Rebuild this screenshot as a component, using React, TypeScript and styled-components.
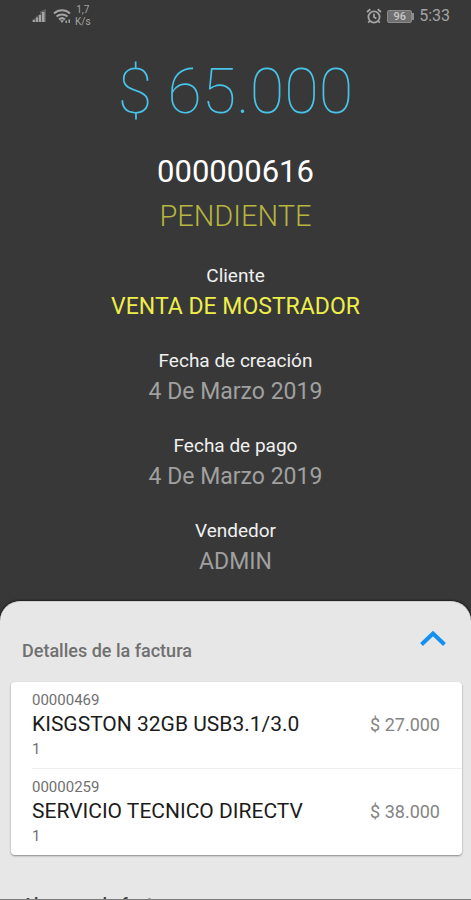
import React, { useState } from "react";
import styled, { createGlobalStyle } from "styled-components";

const Global = createGlobalStyle`
  *, *::before, *::after { box-sizing: border-box; }
  body {
    margin: 0;
    background: #383838;
    font-family: Roboto, "Liberation Sans", sans-serif;
  }
  h1, h2, p, ul, dl, dd { margin: 0; padding: 0; font-weight: 400; }
`;

const Screen = styled.div`
  display: flex;
  flex-direction: column;
  height: 100vh;
  overflow: hidden;
  border-bottom: 1px solid #7c7c7c;
  background: #383838;
`;

const StatusBar = styled.header`
  display: flex;
  flex: none;
  align-items: center;
  justify-content: space-between;
  height: 32px;
  padding: 0 21px 0 32px;
  color: #a4a4a4;
`;

const StatusGroup = styled.div<{ $gap: number }>`
  display: flex;
  align-items: center;
  gap: ${(p) => p.$gap}px;
`;

const Speed = styled.span`
  font-size: 10px;
  line-height: 12px;
  text-align: center;
`;

const Battery = styled.span`
  display: flex;
  align-items: center;

  &::after {
    content: "";
    width: 2px;
    height: 7px;
    background: #8c8c8c;
  }
`;

const BatteryLevel = styled.span`
  width: 25px;
  border: 1px solid #8c8c8c;
  border-radius: 2px;
  background: #707070;
  color: #c8c8c8;
  font-size: 11px;
  font-weight: 500;
  line-height: 11px;
  text-align: center;
`;

const Clock = styled.time`
  font-size: 16px;
  line-height: 20px;
`;

const Summary = styled.main`
  flex: none;
  padding: 20px 16px 0;
  text-align: center;
`;

const Total = styled.h1`
  && { font-weight: 100; }
  color: #48c4ea;
  font-size: 63px;
  line-height: 80px;
`;

const InvoiceNumber = styled.p`
  margin-top: 20px;
  color: #ffffff;
  font-size: 31px;
  line-height: 40px;
`;

const Status = styled.p`
  && { font-weight: 300; }
  margin-top: 4px;
  color: #b5b540;
  font-size: 29px;
  line-height: 40px;
`;

const Fields = styled.dl`
  display: grid;
  gap: 23px;
  && { margin-top: 28px; }
`;

const Label = styled.dt`
  color: #f0f0f0;
  font-size: 19px;
  line-height: 24px;
`;

const Value = styled.dd<{ $accent?: boolean }>`
  margin: 0;
  color: ${(p) => (p.$accent ? "#eeee4a" : "#a0a0a0")};
  font-size: 23px;
  line-height: 38px;
`;

const Sheet = styled.section`
  flex: 1;
  min-height: 0;
  margin-top: 20px;
  padding: 0 9px 0 11px;
  overflow: hidden;
  border-top: 1px solid #d0d0d0;
  border-radius: 20px 20px 0 0;
  background: #e7e7e7;
  box-shadow: 0 0 3px #000000;
`;

const SheetHeader = styled.div`
  display: flex;
  justify-content: space-between;
  padding: 23px 15px 19px 11px;
`;

const SheetTitle = styled.h2`
  margin-top: 14px;
  && { font-weight: 500; }
  color: #707070;
  font-size: 18px;
  line-height: 24px;
`;

const Toggle = styled.button`
  display: block;
  height: 28px;
  padding: 0;
  border: 0;
  background: none;
  cursor: pointer;
`;

const Card = styled.ul`
  && { padding-left: 21px; }
  overflow: hidden;
  list-style: none;
  border-radius: 4px;
  background: #ffffff;
  box-shadow: 0 1px 2px #888888;
`;

const Item = styled.li`
  display: flex;
  align-items: center;
  justify-content: space-between;
  padding: 8px 22px 9px 0;

  & + & { border-top: 1px solid #eeeeee; }
`;

const Small = styled.p`
  color: #707070;
  font-size: 15px;
  line-height: 20px;
`;

const Product = styled.p`
  color: #1c1c1c;
  font-size: 21px;
  line-height: 29px;
`;

const Price = styled.span`
  color: #848484;
  font-size: 18px;
  line-height: 24px;
`;

const NextTitle = styled.h2`
  && { margin: 38px 0 0 11px; font-weight: 500; }
  color: #404040;
  font-size: 18px;
  line-height: 24px;
`;

const SignalIcon = () => (
  <svg width="17" height="14" viewBox="0 0 17 14" fill="currentColor" aria-hidden="true">
    <path d="M0 13v-2l3-2 2-2 3-2V2.500L11 1l3-1v13z" opacity=".35" />
    <path d="M1 11h2v2H1zM4 8.500h2V13H4zM7 6h2v7H7zM10 3h2.500v10H10z" />
  </svg>
);

const WifiIcon = () => (
  <svg width="18" height="15" viewBox="0 0 18 15" fill="none" stroke="currentColor" strokeWidth="2" aria-hidden="true">
    <path d="M1 4.500c4.500-4.200 11.500-4.200 16 0M3.500 7.600c3.200-2.900 7.800-2.900 11 0M6 10.500c1.800-1.600 4.200-1.600 6 0" />
    <path d="M7 11.200h4L9 14zM12.500 11.500H14V14h-1.500zM15.500 10.500H17V14h-1.500z" fill="currentColor" stroke="none" />
  </svg>
);

const AlarmIcon = () => (
  <svg width="16" height="16" viewBox="0 0 16 16" fill="none" stroke="currentColor" strokeWidth="1.8" aria-hidden="true">
    <circle cx="8" cy="9" r="5.600" />
    <path d="M8 5.700V9l2.300 1.500M1 4l3.300-2.800M15 4l-3.300-2.800M3.700 13l-1.500 1.700M12.300 13l1.500 1.700" />
  </svg>
);

const ChevronIcon = () => (
  <svg width="28" height="28" viewBox="0 0 28 28" fill="none" stroke="#1490f0" strokeWidth="4" aria-hidden="true">
    <path d="M2.500 19.500 14 8.500l11.500 11" />
  </svg>
);

const fields = [
  { label: "Cliente", value: "VENTA DE MOSTRADOR", accent: true },
  { label: "Fecha de creación", value: "4 De Marzo 2019" },
  { label: "Fecha de pago", value: "4 De Marzo 2019" },
  { label: "Vendedor", value: "ADMIN" },
];

const items = [
  { code: "00000469", name: "KISGSTON 32GB USB3.1/3.0", quantity: 1, price: "$ 27.000" },
  { code: "00000259", name: "SERVICIO TECNICO DIRECTV", quantity: 1, price: "$ 38.000" },
];

export default function App() {
  const [open, setOpen] = useState(true);
  return (
    <>
      <Global />
      <Screen>
        <StatusBar>
          <StatusGroup $gap={4}>
            <SignalIcon />
            <WifiIcon />
            <Speed>1,7<br />K/s</Speed>
          </StatusGroup>
          <StatusGroup $gap={5}>
            <AlarmIcon />
            <Battery><BatteryLevel>96</BatteryLevel></Battery>
            <Clock>5:33</Clock>
          </StatusGroup>
        </StatusBar>
        <Summary>
          <Total>$ 65.000</Total>
          <InvoiceNumber>000000616</InvoiceNumber>
          <Status>PENDIENTE</Status>
          <Fields>
            {fields.map((f) => (
              <div key={f.label}>
                <Label>{f.label}</Label>
                <Value $accent={f.accent}>{f.value}</Value>
              </div>
            ))}
          </Fields>
        </Summary>
        <Sheet>
          <SheetHeader>
            <SheetTitle id="details">Detalles de la factura</SheetTitle>
            <Toggle type="button" aria-labelledby="details" aria-expanded={open} onClick={() => setOpen(!open)}>
              <ChevronIcon />
            </Toggle>
          </SheetHeader>
          {open && (
            <Card>
              {items.map((item) => (
                <Item key={item.code}>
                  <div>
                    <Small>{item.code}</Small>
                    <Product>{item.name}</Product>
                    <Small>{item.quantity}</Small>
                  </div>
                  <Price>{item.price}</Price>
                </Item>
              ))}
            </Card>
          )}
          <NextTitle>Abonos a la factura</NextTitle>
        </Sheet>
      </Screen>
    </>
  );
}
